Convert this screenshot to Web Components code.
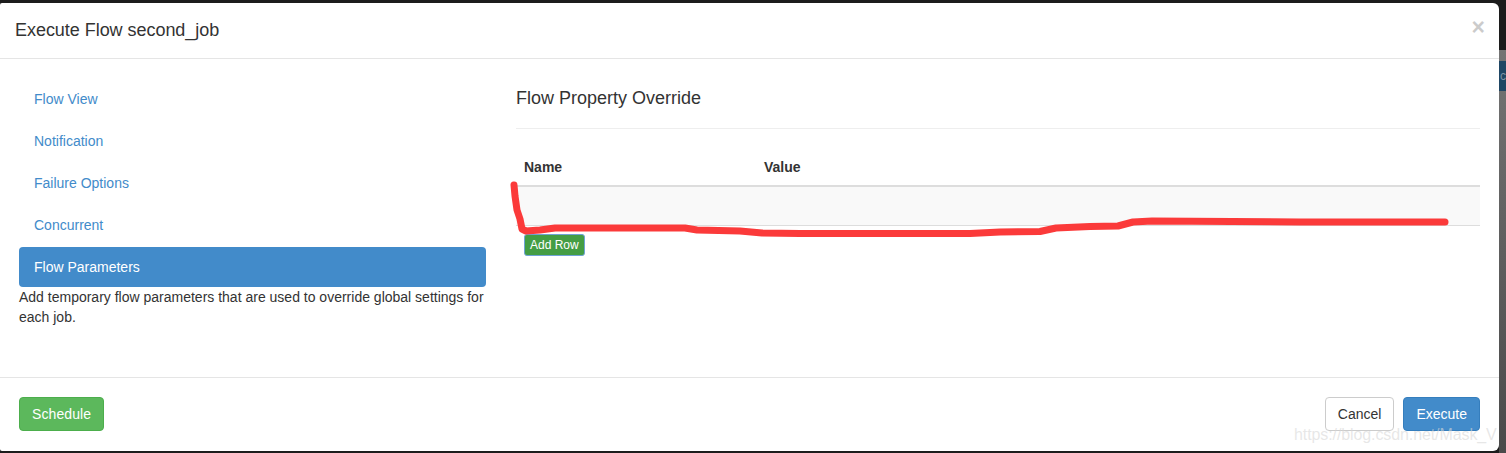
<!DOCTYPE html>
<html><head><meta charset="utf-8">
<style>
html,body{margin:0;padding:0;width:1506px;height:453px;overflow:hidden;background:#222}
body{font-family:"Liberation Sans",Arial,sans-serif;font-size:14px;color:#333;line-height:20px}
</style></head><body>
<template id="t-page"><style>
:host{display:block;position:relative;width:1506px;height:453px;background:#1c1c1c;overflow:hidden}
.strip{position:absolute;left:1499px;top:50px;width:7px;height:403px;background:linear-gradient(#747474,#5a5a5a 60%,#4a4a4a);overflow:hidden}
.strip i{display:block;height:30px;margin-top:11px;background:#1f4664;font:normal 12px/30px "Liberation Sans",sans-serif;color:#7d93a5;padding-left:1px}
.modal{position:absolute;left:0;top:3px;width:1499px;height:448px;background:#fff;border-radius:2px 6px 6px 2px;display:flex;flex-direction:column;box-sizing:border-box}
.mark{position:absolute;left:1294px;top:425px;font-size:16px;line-height:20px;color:rgba(215,215,215,.6);white-space:nowrap;letter-spacing:-.1px}
svg{position:absolute;left:0;top:0;pointer-events:none}
</style>
<div class="strip"><i>c</i></div>
<div class="modal"><slot></slot></div>
<div class="mark">https://blog.csdn.net/Mask_V</div>
<svg width="1506" height="453"><path d="M514 185 L515 196 L517 210 L520 219 L522 229 L526 231 L540 230 L555 228 L600 228 L685 228 L697 230 L740 231 L762 233 L800 233.500 L970 233.500 L1000 232 L1040 231.500 L1056 228 L1090 226.500 L1118 226 L1133 222 L1152 221 L1300 222 L1445 222" fill="none" stroke="#fb3a3a" stroke-width="7" stroke-linecap="round" stroke-linejoin="round"/></svg>
</template>
<template id="t-head"><style>
:host{display:flex;align-items:center;justify-content:space-between;height:56px;box-sizing:border-box;border-bottom:1px solid #e5e5e5;padding:0 15px}
h4{margin:0;font-size:18px;font-weight:400;line-height:20px;color:#333;position:relative;top:-1px;letter-spacing:-.04px}
.x{font-size:23px;font-weight:700;line-height:21px;color:#000;opacity:.2;position:relative;top:-3px;left:1px}
</style><h4><slot></slot></h4><span class="x">×</span></template>
<template id="t-body"><style>
:host{display:grid;grid-template-columns:467px 1fr;column-gap:30px;height:318px;box-sizing:border-box;padding:20px 19px 0 19px}
</style><div><slot name="side"></slot></div><div><slot name="main"></slot></div></template>
<template id="t-nav"><style>
:host{display:block;height:40px;margin-bottom:2px;box-sizing:border-box;padding:10px 15px;border-radius:4px;color:#428bca;line-height:20px}
:host([active]){background:#428bca;color:#fff;margin-bottom:0}
</style><slot></slot></template>
<template id="t-main"><style>
:host{display:block;position:relative}
h3{margin:0;font-size:18px;font-weight:400;line-height:20px;color:#333;padding:9px 0 20px;border-bottom:1px solid #eee}
.hd{display:grid;grid-template-columns:240px 1fr;padding:0 8px 8px;height:58px;align-items:end;font-weight:700;box-sizing:border-box;line-height:20px;border-bottom:2px solid #ddd}
.row{height:39px;box-sizing:border-box;background:#f9f9f9;border-bottom:1px solid #ddd}
.add{display:block;width:max-content;margin:8px 0 0 8px;height:22px;box-sizing:border-box;padding:0 5px;background:#449d44;border:1px solid #6fa3d6;border-radius:3px;color:#fff;font-size:12px;line-height:20px}
</style><h3><slot></slot></h3><div class="hd"><span>Name</span><span>Value</span></div><div class="row"></div><div class="add">Add Row</div></template>
<template id="t-foot"><style>
:host{display:flex;justify-content:space-between;align-items:flex-start;height:74px;box-sizing:border-box;border-top:1px solid #e5e5e5;padding:19px 19px 0}
.r{display:flex;gap:9px}
</style><div><slot name="left"></slot></div><div class="r"><slot name="right"></slot></div></template>
<template id="t-btn"><style>
:host{display:inline-block;height:34px;box-sizing:border-box;padding:6px 12px;border:1px solid #ccc;border-radius:4px;background:#fff;color:#333;line-height:20px;white-space:nowrap}
:host([kind=green]){background:#5cb85c;border-color:#4cae4c;color:#fff;letter-spacing:.1px}
:host([kind=blue]){background:#428bca;border-color:#357ebd;color:#fff}
</style><slot></slot></template>
<x-page>
<x-head>Execute Flow second_job</x-head>
<x-body>
<div slot="side">
<x-nav>Flow View</x-nav><x-nav>Notification</x-nav><x-nav>Failure Options</x-nav><x-nav>Concurrent</x-nav><x-nav active>Flow Parameters</x-nav>
<div style="color:#333">Add temporary flow parameters that are used to override global settings for each job.</div>
</div>
<x-main slot="main">Flow Property Override</x-main>
</x-body>
<x-foot><x-btn slot="left" kind="green">Schedule</x-btn><x-btn slot="right">Cancel</x-btn><x-btn slot="right" kind="blue">Execute</x-btn></x-foot>
</x-page>
<script>
for (const [n,t] of [['x-page','t-page'],['x-head','t-head'],['x-body','t-body'],['x-nav','t-nav'],['x-main','t-main'],['x-foot','t-foot'],['x-btn','t-btn']]) {
  customElements.define(n, class extends HTMLElement {
    constructor(){super();this.attachShadow({mode:'open'}).appendChild(document.getElementById(t).content.cloneNode(true));}
  });
}
</script>
</body></html>
